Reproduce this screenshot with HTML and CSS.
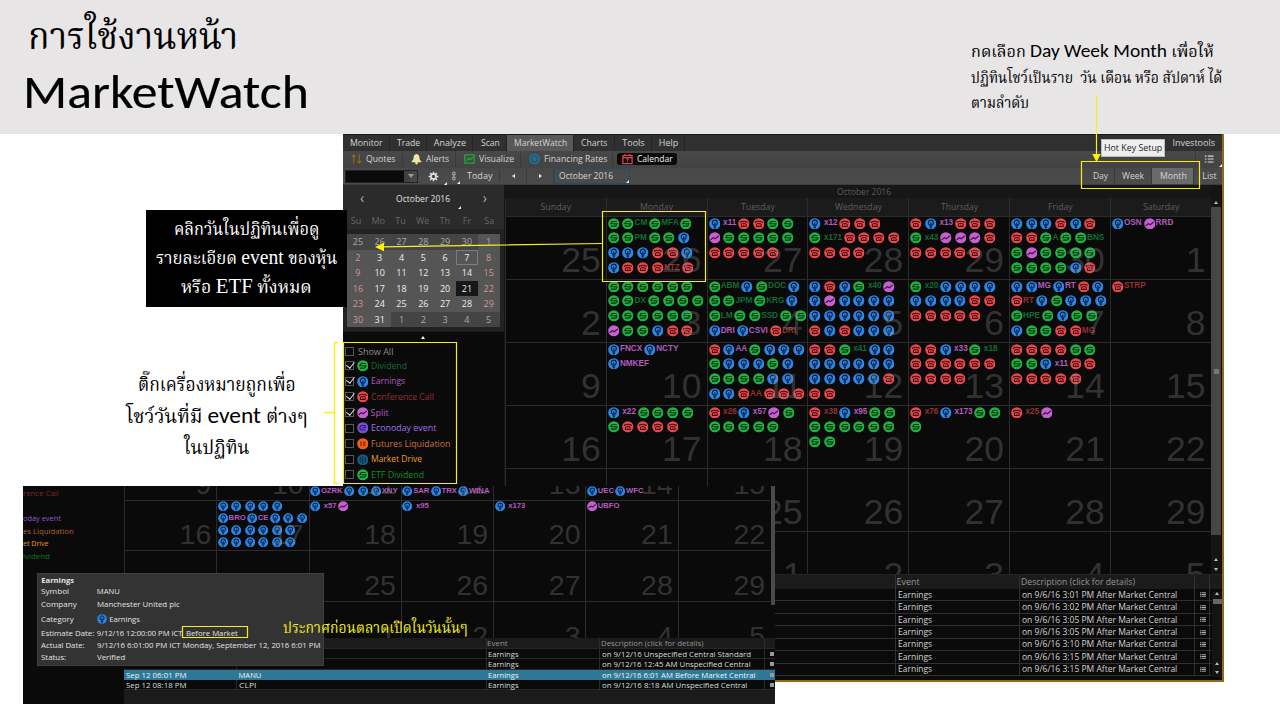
FILE: index.html
```html
<!DOCTYPE html>
<html lang="th">
<head>
<meta charset="utf-8">
<title>MarketWatch</title>
<link rel="stylesheet" href="styles.css">
</head>
<body>
<svg class="defs" aria-hidden="true">
  <symbol id="s" viewBox="0 0 12 12"><circle cx="6" cy="6" r="5.8" fill="#1fb243"/><path d="M9 3.6H5Q3.4 3.6 3.4 4.8T5 6H7.2Q8.7 6 8.7 7.2T7.2 8.4H3M2.2 6H5M7.5 6H10" fill="none" stroke="#052e10" stroke-width="1.15"/></symbol>
  <symbol id="e" viewBox="0 0 12 12"><circle cx="6" cy="6" r="5.8" fill="#2f86e6"/><path d="M4.7 7.3Q3.4 6.2 3.4 4.8A2.6 2.6 0 0 1 8.6 4.8Q8.6 6.2 7.3 7.3Z" fill="none" stroke="#06203f" stroke-width="1.2"/><path d="M6 4.5V7.5M4.6 9H7.4M5.2 10.2H6.8" stroke="#06203f" stroke-width="1.1"/></symbol>
  <symbol id="c" viewBox="0 0 12 12"><circle cx="6" cy="6" r="5.8" fill="#e64a4e"/><path d="M2.6 5.1V4.2Q6 2.4 9.4 4.2V5.1M3.6 8.8V6.7Q4.2 5.4 6 5.4T8.4 6.7V8.8Z" fill="none" stroke="#420c0e" stroke-width="1.1"/><circle cx="6" cy="7.3" r=".7" fill="#420c0e"/></symbol>
  <symbol id="p" viewBox="0 0 12 12"><circle cx="6" cy="6" r="5.8" fill="#c65fd0"/><path d="M1.8 8L4.5 5.8L6.4 7L10.2 4" fill="none" stroke="#33103a" stroke-width="1.2"/></symbol>
  <symbol id="econ" viewBox="0 0 12 12"><circle cx="6" cy="6" r="5.8" fill="#7b50d8"/><path d="M8.6 3.7H4.8Q3 3.7 3 6T4.8 8.3H8.6M5 6H8.6V3.7" fill="none" stroke="#2b1763" stroke-width="1.1"/></symbol>
  <symbol id="fut" viewBox="0 0 12 12"><circle cx="6" cy="6" r="5.8" fill="#f25f12"/><path d="M3.2 3.5H5V8.5H3.2ZM6 3.5H8.7V8.5H6Z" fill="#a63300"/></symbol>
  <symbol id="mkt" viewBox="0 0 12 12"><circle cx="6" cy="6" r="5.8" fill="#155a7c"/><path d="M6 2V10M3.8 3.4Q2.6 6 3.8 8.6M8.2 3.4Q9.4 6 8.2 8.6" fill="none" stroke="#0a2e42" stroke-width="1.1"/></symbol>
</svg>

<main class="slide">
  <header class="band"></header>
  <h1 class="title"><span class="thai-title" data-w="210">การใช้งานหน้า</span><span class="latin-title" data-w="286">MarketWatch</span></h1>

  <section class="app">
    <nav class="menu">
      <span style="width:47px"><b data-w="33">Monitor</b></span><span style="width:37px"><b data-w="23">Trade</b></span><span style="width:46px"><b data-w="32">Analyze</b></span><span style="width:34px"><b data-w="19">Scan</b></span><span class="on" style="width:67px"><b data-w="53">MarketWatch</b></span><span style="width:41px"><b data-w="26">Charts</b></span><span style="width:37px"><b data-w="22">Tools</b></span><span style="width:33px"><b data-w="19">Help</b></span>
      <b class="invest" data-w="42">Investools</b>
    </nav>
    <div class="bar sub">
      <span class="tool" style="width:60px"><svg viewBox="0 0 12 12"><path d="M3 11V2M1 4L3 1.5L5 4M9 1V10M7 8L9 10.5L11 8" fill="none" stroke="#8c6a1c" stroke-width="1.3"/></svg><b data-w="30">Quotes</b></span>
      <span class="tool" style="width:53px"><svg viewBox="0 0 12 12"><path d="M6 .5Q9.5 1 9.3 6L11.7 9.5H.3L2.7 6Q2.5 1 6 .5Z" fill="#f3e7a0"/><circle cx="6" cy="10.4" r="1.5" fill="#f3e7a0"/></svg><b data-w="23">Alerts</b></span>
      <span class="tool" style="width:65px"><svg viewBox="0 0 12 12"><path d="M1 1.5H11V10.5H1ZM3 8L5 5L7 7L9.5 4" fill="none" stroke="#19ab3c" stroke-width="1.4"/></svg><b data-w="35">Visualize</b></span>
      <span class="tool" style="width:92px"><svg viewBox="0 0 12 12"><circle cx="6" cy="6" r="5" fill="none" stroke="#1477a8" stroke-width="1.8"/><circle cx="6" cy="6" r="2.6" fill="#1477a8"/></svg><b data-w="63">Financing Rates</b></span>
      <span class="tool cal-on"><svg viewBox="0 0 12 12"><path d="M1 2.2H11V11H1ZM1 4.5H11M3.4 .5V3M8.6 .5V3" fill="none" stroke="#e44a50" stroke-width="1.3"/><path d="M4.5 6H7.2L5.8 7.5Q7.5 8.5 5 9.7" fill="none" stroke="#e44a50"/></svg><b data-w="36">Calendar</b></span>
      <span class="tool listbtn"><svg viewBox="0 0 12 12"><path d="M1 2.5H3M4.5 2.5H11.5M1 6H3M4.5 6H11.5M1 9.5H3M4.5 9.5H11.5" stroke="#ddd" stroke-width="1.3"/></svg><i class="corner"></i></span>
    </div>
    <div class="bar nav">
      <span class="combo"><i></i></span>
      <span class="gear"><svg viewBox="0 0 14 14"><g stroke="#e8e8e8" stroke-width="1.8"><path d="M7 .8V13.2M.8 7H13.2M2.7 2.7L11.3 11.3M11.3 2.7L2.7 11.3"/></g><circle cx="7" cy="7" r="3.2" fill="#484848" stroke="#e8e8e8" stroke-width="1.8"/></svg><i class="corner"></i></span>
      <span class="chain"><svg viewBox="0 0 8 12"><path d="M2.2 1H5.4V4.6H2.2ZM2.2 7.4H5.4V11H2.2ZM3.8 4V8" fill="none" stroke="#bbb" stroke-width="1.1"/></svg><i class="corner"></i></span>
      <span class="today"><b data-w="25">Today</b></span>
      <span class="step"><i class="tri left"></i></span><span class="step"><i class="tri right"></i></span>
      <span class="date"><b data-w="54">October 2016</b><i class="corner"></i></span>
      <span class="views"><span style="width:29px"><b data-w="15">Day</b></span><span style="width:37px"><b data-w="22">Week</b></span><span class="on" style="width:42px"><b data-w="27">Month</b></span><span class="last" style="width:30px"><b data-w="14">List</b></span></span>
    </div>

    <div class="body">
      <aside class="side">
        <div class="mhead"><span>‹</span><b data-w="54">October 2016</b><span>›</span><i class="corner"></i></div>
        <div class="mdays"><span>Su</span><span>Mo</span><span>Tu</span><span>We</span><span>Th</span><span>Fr</span><span>Sa</span></div>
        <div class="mgrid" id="mini"></div>
        <div class="legend">
          <i class="tri up"></i>
          <ul>
            <li style="color:#8a8a8a"><i class="box"></i><b data-w="35">Show All</b></li>
            <li style="color:#0f6d34"><i class="box on"></i><svg><use href="#s"/></svg><b data-w="36">Dividend</b></li>
            <li style="color:#b45bc0"><i class="box on"></i><svg><use href="#e"/></svg><b data-w="34">Earnings</b></li>
            <li style="color:#96302f"><i class="box on"></i><svg><use href="#c"/></svg><b data-w="63">Conference Call</b></li>
            <li style="color:#b45bc0"><i class="box on"></i><svg><use href="#p"/></svg><b data-w="18">Split</b></li>
            <li style="color:#a070ee"><i class="box"></i><svg><use href="#econ"/></svg><b data-w="65">Econoday event</b></li>
            <li style="color:#d0703c"><i class="box"></i><svg><use href="#fut"/></svg><b data-w="79">Futures Liquidation</b></li>
            <li style="color:#f09c1c"><i class="box"></i><svg><use href="#mkt"/></svg><b data-w="51">Market Drive</b></li>
            <li style="color:#118a22"><i class="box"></i><svg><use href="#s"/></svg><b data-w="53">ETF Dividend</b></li>
          </ul>
        </div>
      </aside>
      <section class="cal">
        <div class="calhead"><b data-w="54">October 2016</b></div>
        <div class="dows"><span><b data-w="31">Sunday</b></span><span><b data-w="33">Monday</b></span><span><b data-w="34">Tuesday</b></span><span><b data-w="47">Wednesday</b></span><span><b data-w="37">Thursday</b></span><span><b data-w="25">Friday</b></span><span><b data-w="36">Saturday</b></span></div>
        <div class="grid" id="main"></div>
      </section>
      <div class="scroll"><i class="tri up"></i><div class="thumb"><i></i></div><i class="tri up"></i><i class="tri down"></i></div>
    </div>
    <div class="table">
      <div class="tr th"><span class="td1"></span><span class="td2"><b data-w="23">Event</b></span><span class="td3"><b data-w="114">Description (click for details)</b></span><span class="td4"></span></div>
      <div id="rows"></div>
      <div class="tscroll"><i class="tri up"></i><em></em><i class="tri up"></i><i class="tri down"></i></div>
    </div>
  </section>

  <section class="app2">
    <div class="left2">
      <b style="color:#842423" data-w="36">rence Call</b><b></b><b style="color:#8a5cd6" data-w="38">oday event</b><b style="color:#b55f2e" data-w="51">es Liquidation</b><b style="color:#e89a18" data-w="26">et Drive</b><b style="color:#0c7a1c" data-w="27">ividend</b>
    </div>
    <div class="right2">
      <div class="calwrap2"><div class="grid small" id="second"></div><i class="thumb2"></i></div>
      <div class="t2">
        <div class="r2 head"><span></span><span></span><span><b data-w="21">Event</b></span><span><b data-w="103">Description (click for details)</b></span><i></i></div>
        <div class="r2"><span></span><span></span><span><b data-w="31">Earnings</b></span><span><b data-w="149">on 9/12/16 Unspecified Central Standard</b></span><i></i></div>
        <div class="r2"><span></span><span></span><span><b data-w="31">Earnings</b></span><span><b data-w="149">on 9/12/16 12:45 AM Unspecified Central</b></span><i></i></div>
        <div class="r2 sel"><span><b data-w="60">Sep 12 06:01 PM</b></span><span><b data-w="23">MANU</b></span><span><b data-w="31">Earnings</b></span><span><b data-w="153">on 9/12/16 6:01 AM Before Market Central</b></span><i></i></div>
        <div class="r2"><span><b data-w="60">Sep 12 08:18 PM</b></span><span><b data-w="17">CLPI</b></span><span><b data-w="31">Earnings</b></span><span><b data-w="145">on 9/12/16 8:18 AM Unspecified Central</b></span><i></i></div>
      </div>
    </div>
    <dl class="tip">
      <dt><strong data-w="33">Earnings</strong></dt><dd></dd>
      <dt><b data-w="28">Symbol</b></dt><dd><b data-w="23">MANU</b></dd>
      <dt><b data-w="36">Company</b></dt><dd><b data-w="83">Manchester United plc</b></dd>
      <dt><b data-w="33">Category</b></dt><dd><svg><use href="#e"/></svg><b data-w="31">Earnings</b></dd>
      <dt><b data-w="53">Estimate Date:</b></dt><dd><b data-w="86">9/12/16 12:00:00 PM ICT</b><b class="bm" data-w="52">Before Market</b></dd>
      <dt><b data-w="44">Actual Date:</b></dt><dd><b data-w="223">9/12/16 6:01:00 PM ICT Monday, September 12, 2016 6:01 PM</b></dd>
      <dt><b data-w="25">Status:</b></dt><dd><b data-w="28">Verified</b></dd>
    </dl>
  </section>

  <p class="note n1"><span data-w="243">กดเลือก <q>Day Week Month</q> เพื่อให้</span><span data-w="251">ปฏิทินโชว์เป็นราย&nbsp; วัน เดือน หรือ สัปดาห์ ได้</span><span data-w="58">ตามลำดับ</span></p>
  <p class="note n2"><span data-w="145">คลิกวันในปฏิทินเพื่อดู</span><span data-w="181">รายละเอียด <q>event</q> ของหุ้น</span><span data-w="131">หรือ <q>ETF</q> ทั้งหมด</span></p>
  <p class="note n3"><span data-w="158">ติ๊กเครื่องหมายถูกเพื่อ</span><span data-w="181">โชว์วันที่มี <q>event</q> ต่างๆ</span><span data-w="66">ในปฏิทิน</span></p>
  <p class="note n4"><span data-w="185">ประกาศก่อนตลาดเปิดในวันนั้นๆ</span></p>
  <div class="hotkey"><b data-w="58">Hot Key Setup</b></div>

  <svg class="marks" viewBox="0 0 1280 720">
    <g fill="none" stroke="#f4f01c" stroke-width="1.2">
      <path d="M602.5 211.5H705.5V281.5H602.5Z"/><path d="M1081.5 161.5H1199.5V188.5H1081.5Z"/><path d="M343.5 342.5H456.5V483.5H343.5Z"/><path d="M182.5 626.5H247.5V637.5H182.5Z"/>
      <path d="M602 243.5L382 246.8M1096.5 95V156"/><path d="M337.5 342.5H334.5V483.5H337.5M324 412.5H334" stroke-width="1.5"/>
    </g>
    <path d="M375 247L384 242.5V251.3ZM1096.5 162L1092.3 154H1100.7Z" fill="#fff200"/>
  </svg>
</main>
<script src="app.js"></script>
</body>
</html>
```
FILE: styles.css
```css
* { box-sizing: border-box; }
body { margin: 0; background: #fff; font-family: "Open Sans", "Noto Sans", sans-serif; }
b { font-weight: 400; }
b, span[data-w], strong { white-space: nowrap; }
[data-w] { display: inline-block; }
p, h1, ul, dl, dd { margin: 0; padding: 0; }
ul { list-style: none; }
q { quotes: none; }
.defs { position: absolute; width: 0; height: 0; }
.slide { position: relative; width: 1280px; height: 720px; overflow: hidden; }
.band { height: 134px; background: #e7e5e6; }

.title { position: absolute; left: 23px; top: 12px; display: flex; flex-direction: column; align-items: flex-start; font-weight: 400; color: #000; }
.thai-title { font: 37px/56px "Norasi", "Kinnari", "Noto Serif Thai", "Liberation Serif", serif; margin-left: 5px; }
.latin-title { font: 47px/48px Carlito, Lato, sans-serif; -webkit-text-stroke: .2px #000; }

.app { position: absolute; left: 343px; top: 134px; width: 881px; height: 548px; background: #0a0a0a; border-right: 2px solid #8f6a18; border-bottom: 2px solid #8f6a18; color: #d4d4d4; font-size: 9px; line-height: 12px; display: flex; flex-direction: column; }
.menu { display: flex; height: 17px; flex: none; background: #303030; border-top: 1px solid #1a1a1a; }
.menu span { display: flex; align-items: center; justify-content: center; border-right: 1px solid #242424; padding-left: 1px; }
.menu .on { background: #585858; }
.menu .invest { margin: 2px 7px 0 auto; }
.bar { display: flex; height: 17px; flex: none; align-items: center; background: linear-gradient(#484848, #434343); }
.sub { padding-bottom: 1px; }
.tool { display: flex; align-items: center; gap: 4px; height: 16px; padding-left: 8px; border-right: 1px solid #3a3a3a; }
.tool svg { width: 11px; height: 12px; flex: none; }
.cal-on { margin-left: 4px; height: 12px; width: 60px; padding-left: 5px; background: #0a0a0a; border: 0; border-radius: 3px; color: #eee; }
.listbtn { position: relative; margin-left: auto; width: 27px; border-right: 0; border-left: 1px solid #3a3a3a; padding-left: 8px; }
.listbtn svg { width: 10px; height: 10px; }
.corner { width: 0; height: 0; border-left: 3px solid transparent; border-bottom: 3px solid #eee; align-self: flex-end; flex: none; }
.listbtn .corner { margin-left: auto; }
.nav { background: linear-gradient(#484848, #4b4b4b); border-bottom: 1px solid #3d3d3d; }
.combo { margin-left: 2px; width: 73px; height: 13px; background: #0a0a0a; border: 1px solid #222; display: flex; justify-content: flex-end; }
.combo i { width: 13px; background: linear-gradient(90deg, #3d3d3d, #4a4a4a); display: flex; justify-content: center; align-items: center; }
.combo i::after { content: ""; border: 3px solid transparent; border-top: 4px solid #999; border-bottom: 0; }
.gear { display: flex; margin-left: 10px; width: 19px; align-items: center; justify-content: space-between; }
.gear svg { width: 11px; height: 11px; }
.chain { display: flex; margin-left: 4px; width: 9px; align-items: center; }
.chain svg { width: 7px; height: 10px; }
.gear .corner, .chain .corner { margin-bottom: -3px; }
.today { width: 40px; padding-left: 7px; border-right: 1px solid #3d3d3d; }
.step { width: 27px; height: 16px; display: flex; align-items: center; justify-content: center; border-right: 1px solid #3d3d3d; }
.tri { display: block; width: 0; height: 0; border: 2px solid transparent; }
.tri.left { border-right: 3px solid #eee; border-left: 0; }
.tri.right { border-left: 3px solid #eee; border-right: 0; }
.tri.up { border-bottom: 3px solid #bbb; border-top: 0; }
.tri.down { border-top: 3px solid #bbb; border-bottom: 0; }
.date { display: flex; width: 76px; height: 16px; border: 1px solid #1c5264; padding-left: 4px; align-items: center; justify-content: space-between; }
.views { display: flex; margin-left: auto; margin-right: -2px; height: 16px; }
.views > span { display: flex; align-items: center; justify-content: center; border-right: 1px solid #3a3a3a; padding-left: 1px; }
.views > .last { border-right: 0; }
.views .on { background: #6a6a6a; }

.body { display: flex; height: 389px; flex: none; }
.side { width: 162px; background: #222; display: flex; flex-direction: column; border-right: 1px solid #151515; }
.mhead { display: flex; align-items: center; height: 28px; padding: 0 17px; background: #2b2b2b; justify-content: space-between; color: #e2e2e2; position: relative; }
.mhead span { font-size: 14px; color: #aaa; line-height: 12px; margin-top: -3px; }
.mhead .corner { position: absolute; left: 115px; bottom: 4px; }
.mdays { display: grid; grid-template-columns: repeat(7, 22.2px); height: 16px; background: #2b2b2b; color: #666; text-align: center; line-height: 15px; margin-bottom: 5px; padding-left: 2px; }
.mgrid { display: grid; grid-template-columns: repeat(7, 21.8px); grid-auto-rows: 15.5px; margin-left: 4px; width: 153px; background: #555; height: 93px; color: #eee; text-align: center; line-height: 15px; }
.mgrid .off { background: #444; color: #aaa; }
.mgrid .red { color: #cf9894; }
.mgrid .off.red { color: #aaa; }
.mgrid .ring { border: 1px solid #7d7d7d; line-height: 13px; }
.mgrid .pick { background: #171717; }
.legend { background: #0a0a0a; margin-top: 4px; flex: 1; border-top: 1px solid #1a1a1a; }
.legend > .tri { margin: 4px 0 0 78px; border-bottom-color: #fff; }
.legend ul { padding: 6px 0 0 2px; }
.legend li { display: flex; align-items: center; height: 15.6px; }
.legend li:first-child { height: 13px; }
.legend li svg { width: 11.6px; height: 11.6px; margin: 0 2.4px 0 2.6px; flex: none; }
.legend li:first-child b { margin-left: 4px; }
.box { width: 9px; height: 9px; border: 1px solid #555; flex: none; position: relative; }
.box.on::after { content: ""; position: absolute; left: 1.5px; top: -2.5px; width: 3.5px; height: 7px; border: solid #e8e8e8; border-width: 0 1.6px 1.6px 0; transform: rotate(38deg); }
.cal { width: 706px; display: flex; flex-direction: column; }
.calhead { height: 13px; background: #161616; text-align: center; color: #5c5c5c; padding-left: 13px; line-height: 13px; }
.dows { display: grid; grid-template-columns: repeat(7, 100.8px); height: 18px; flex: none; background: #1b1b1b; color: #5e5e5e; text-align: center; }
.dows span { border-left: 1px solid #2c2c2c; display: flex; align-items: center; justify-content: center; }
.grid { display: grid; grid-template-columns: repeat(7, 100.8px); grid-auto-rows: 63px; overflow: hidden; flex: 1; }
.cell { position: relative; border-left: 1px solid #2b2b2b; border-top: 1px solid #2b2b2b; padding: 0 0 0 1px; overflow: hidden; }
.line { display: flex; height: 14.8px; align-items: center; }
.line:first-child { margin-top: -1px; }
.line svg { width: 11.6px; height: 11.6px; margin-right: 3.1px; flex: none; }
.line b { font: bold 8.2px/12px "Liberation Sans", Arial, sans-serif; margin: 0 1.9px 0 -2.6px; }
.line b.cnt { margin: 0 1.6px 0 -.2px; }
.num { position: absolute; right: 5px; bottom: -1px; font: 35.5px/40px "Liberation Sans", Arial, sans-serif; color: rgba(150,150,150,.3); }
.scroll { width: 10px; background: #141414; display: flex; flex-direction: column; align-items: center; padding: 16px 0 3px; }
.thumb { width: 10px; margin: 3px 0 23px; flex: 1; background: #464646; display: flex; align-items: center; justify-content: center; }
.thumb i { width: 5px; height: 5px; background: #777; }
.scroll .down { margin-top: 7px; }
.table { position: relative; height: 105px; flex: none; background: #0a0a0a; border-top: 1px solid #222; }
.tr { display: grid; grid-template-columns: 552.5px 124.5px 175px 15px; height: 12.45px; border-bottom: 1px solid #303030; }
.tr.th { height: 14px; background: #1b1b1b; color: #949494; border: 0; }
.tr span { border-right: 1px solid #303030; padding-left: 2px; overflow: hidden; display: flex; align-items: center; }
.tr.th span { padding-left: 1px; }
.tr .td4 { padding-left: 5px; }
.td4 svg { width: 6px; height: 5px; }
.tscroll { position: absolute; right: 0; top: 17px; width: 10px; height: 85px; display: flex; flex-direction: column; align-items: center; background: #141414; }
.tscroll em { width: 9px; height: 5px; margin: 4px 0 58px; background: #666; flex: none; }
.tscroll .down { margin-top: 6px; }

.app2 { position: absolute; left: 23px; top: 486px; width: 752px; height: 218px; background: #0a0a0a; display: flex; font-size: 7.6px; line-height: 10px; color: #ddd; }
.left2 { width: 101px; flex: none; display: flex; flex-direction: column; align-items: flex-start; padding-top: 1px; }
.left2 b { height: 12.6px; line-height: 12.6px; }
.right2 { flex: 1; min-width: 0; background: #1b1b1b; display: flex; flex-direction: column; }
.calwrap2 { display: flex; height: 152px; background: #0a0a0a; overflow: hidden; }
.grid.small { grid-template-columns: repeat(7, 92.3px); grid-auto-rows: 50.7px; margin-top: -37px; flex: none; width: 647px; height: 189px; }
.thumb2 { width: 4px; height: 119px; background: #4a4a4a; }
.small .line { height: 12.1px; }
.small .line svg { width: 10.4px; height: 10.4px; margin-right: 3.1px; }
.small .line b { font-size: 7.7px; margin: 0 1.4px 0 -2.8px; }
.small .line b.cnt { margin: 0 1.4px 0 0; }
.small .cell { padding: 0 0 0 .6px; }
.small .num { font-size: 28.5px; line-height: 32px; right: 5px; bottom: 0; }
.r2 { display: grid; grid-template-columns: 113px 249.5px 113.5px 165px 9px; height: 10.3px; background: #0a0a0a; border-bottom: 1px solid #272727; }
.r2 span { border-right: 1px solid #2a2a2a; padding-left: 1.5px; display: flex; align-items: center; }
.r2 i { width: 4px; height: 4px; margin: 3px 0 0 5px; background: #999; }
.r2.head { height: 11px; background: #1b1b1b; color: #949494; }
.r2.head span { padding-left: .5px; }
.r2.head i { visibility: hidden; }
.r2.sel { background: #2e7897; border-color: #2e7897; color: #eef4f6; }
.r2.sel span { border-color: #2e7897; }
.tip { position: absolute; left: 14px; top: 87px; width: 287px; height: 93px; background: #333; border: 1px solid #404040; display: grid; grid-template-columns: 55.5px 1fr; grid-template-rows: 11px 12.5px 12.5px 18px 9px 15px 10px; padding-left: 3.3px; color: #e4e4e4; align-items: center; }
.tip dt, .tip dd { white-space: nowrap; display: flex; align-items: center; }
.tip svg { width: 10px; height: 10px; margin-right: 2.5px; }
.tip strong { font-weight: 700; }
.bm { margin-left: 3px; }

.note { position: absolute; display: flex; flex-direction: column; color: #000; font-family: "Norasi", "Kinnari", "Noto Serif Thai", "Liberation Serif", serif; }
.n1 { left: 971px; top: 41px; font-size: 15px; line-height: 25.5px; align-items: flex-start; }
.n1 q { font: 18px/20px Carlito, Lato, sans-serif; }
.n2 { left: 146px; top: 210px; width: 201px; height: 97px; background: #000; color: #fff; font-size: 18px; line-height: 29px; align-items: center; padding-top: 6px; }
.n2 q { font: 21px/20px "Liberation Serif", serif; }
.n3 { left: 120px; top: 371px; width: 194px; align-items: center; font-size: 19px; line-height: 31.5px; }
.n3 q { font: 23px/20px Carlito, Lato, sans-serif; }
.n4 { left: 283px; top: 618px; font-size: 15.5px; line-height: 22px; color: #f4f01c; }
.hotkey { position: absolute; left: 1101px; top: 139px; width: 64px; height: 18px; background: #eee; border: 1px solid #bbb; color: #222; font-size: 9px; line-height: 16px; text-align: center; }
.marks { position: absolute; left: 0; top: 0; width: 1280px; height: 720px; pointer-events: none; }
```
FILE: app.js
```js
// Event codes: s dividend, e earnings, c conference call, p split; ":XYZ" adds a label.
const TEXT = { s: '#0f6d34', e: '#b45bc0', c: '#96302f', p: '#b45bc0' };
const october = {
  26: 's s:CM s:MFA s/s s:PM s s e/e e e c c e/e c c c:NTZ c',
  27: 'e:x11 c c s s/p s s s s s/c c c c c',
  28: 'e:x12 c c c/s:x171 c c c c/c c c c',
  29: 'c e:x13 c c c/s:x43 p p p c/c c c c c',
  30: 'e e e c e c/c c s:A s s:BNS/s p s s s s/s s s s e c',
  1: 'e:OSN p:RRD',
  3: 's s s s s s/s s:DX s s s s/s s s s s s/p s s e c c',
  4: 's:ABM e s:DOC e/s s:JPM s:KRG e/s:LM s s:SSD s s/e:DRI e:CSVI c:DRI',
  5: 'e c e s:x40 p/e p e e e e/e e e e e e/c e c e e e',
  6: 's:x20 e e e e/e e e e c c/c c c c c',
  7: 'e e:MG e:RT c e/c:RT e s e e e/s:HPE s e s s/e s s c c:MG',
  8: 'c:STRP',
  10: 'e:FNCX e:NCTY/e:NMKEF',
  11: 'c e:AA s e e e/s e e e s e/s s s s e e/e e c:AA c c c',
  12: 'c c s:x41 e e/e e e e e e/e e e e e c/c c',
  13: 'c c e:x33 s:x18/c c c c c c/c c c c',
  14: 'c c c c s s/s s e:x11 c c/c c c c c',
  17: 'e:x22 s s s s/s c c c c',
  18: 'c:x26 e:x57 p s/s s s s s',
  19: 'c:x38 e:x95 s s/s s s s s s/s s',
  20: 'c:x76 e:x173 s s/s',
  21: 'c:x25 p'
};
const earnings = {
  11: '///e:OZRK e e e:XNY', 12: '///e:SAR e:TRX e:WINA', 14: '///e:UEC e:WFC',
  17: 'e e e e e/e:BRO e:CE e e e/e e e e e e/e e e e e e',
  18: 'e:x57 p', 19: 'e:x95', 20: 'e:x173', 21: 'p:UBFO'
};
function line(text) {
  return '<div class="line">' + text.split(' ').filter(Boolean).map(t => {
    const [k, label] = t.split(':');
    const cls = /^x\d/.test(label || '') ? ' class="cnt"' : '';
    return `<svg><use href="#${k}"/></svg>` + (label ? `<b${cls} style="color:${TEXT[k]}">${label}</b>` : '');
  }).join('') + '</div>';
}
function calendar(id, days, data) {
  const used = new Set();
  document.getElementById(id).innerHTML = days.map(d => {
    const ev = used.has(d) ? '' : data[d] || '';
    used.add(d);
    return `<div class="cell">${ev.split('/').map(line).join('')}<span class="num">${d}</span></div>`;
  }).join('');
}
const range = (a, b) => Array.from({ length: b - a + 1 }, (_, i) => a + i);
const days = [...range(25, 30), ...range(1, 31), ...range(1, 5)];
calendar('main', days, october);
// The second window is scrolled down by two weeks.
calendar('second', days.slice(14), earnings);
document.getElementById('mini').innerHTML = days.map((d, i) => {
  const c = [];
  if (i < 6 || i > 36) c.push('off');
  if (i % 7 === 0 || i % 7 === 6) c.push('red');
  if (i === 12) c.push('ring');
  if (i === 26) c.push('pick');
  return `<span class="${c.join(' ')}">${d}</span>`;
}).join('');
document.getElementById('rows').innerHTML = ['3:01', '3:02', '3:05', '3:05', '3:10', '3:15', '3:15'].map(t =>
  `<div class="tr"><span class="td1"></span><span class="td2"><b data-w="34">Earnings</b></span><span class="td3"><b data-w="155">on 9/6/16 ${t} PM After Market Central</b></span><span class="td4"><svg viewBox="0 0 6 5"><path d="M0 .8H1.5M2 .8H6M0 2.5H1.5M2 2.5H6M0 4.2H1.5M2 4.2H6" stroke="#aaa"/></svg></span></div>`).join('');
document.querySelectorAll('[data-w]').forEach(el => {
  const w = +el.dataset.w, n = el.offsetWidth;
  el.style.transformOrigin = '0 50%';
  el.style.transform = `scaleX(${w / n})`;
  el.style.marginRight = `${(parseFloat(getComputedStyle(el).marginRight) || 0) + w - n}px`;
});
```
